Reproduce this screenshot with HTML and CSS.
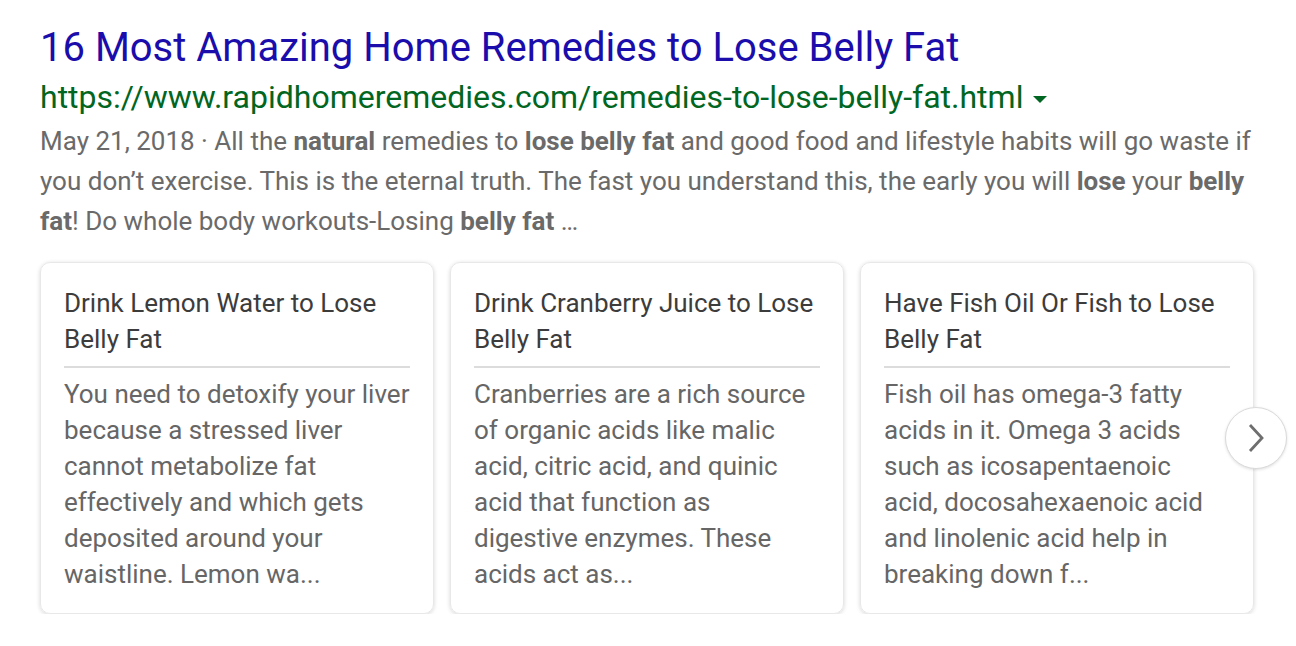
FILE: index.html
```html
<!DOCTYPE html>
<html>
<head>
<meta charset="utf-8">
<link rel="stylesheet" href="styles.css">
</head>
<body>
<div class="result">
  <h3 class="title">16 Most Amazing Home Remedies to Lose Belly Fat</h3>
  <div class="url">https://www.rapidhomeremedies.com/remedies-to-lose-belly-fat.html <span class="caret"></span></div>
  <div class="snippet">May 21, 2018 · All the <b>natural</b> remedies to <b>lose belly fat</b> and good food and lifestyle habits will go waste if you don’t exercise. This is the eternal truth. The fast you understand this, the early you will <b>lose</b> your <b>belly fat</b>! Do whole body workouts-Losing <b>belly fat</b> …</div>
  <div class="carousel">
    <div class="card">
      <div class="card-title">Drink Lemon Water to Lose Belly Fat</div>
      <div class="card-body">You need to detoxify your liver because a stressed liver cannot metabolize fat effectively and which gets deposited around your waistline. Lemon wa...</div>
    </div>
    <div class="card">
      <div class="card-title">Drink Cranberry Juice to Lose Belly Fat</div>
      <div class="card-body">Cranberries are a rich source of organic acids like malic acid, citric acid, and quinic acid that function as digestive enzymes. These acids act as...</div>
    </div>
    <div class="card">
      <div class="card-title">Have Fish Oil Or Fish to Lose Belly Fat</div>
      <div class="card-body">Fish oil has omega-3 fatty acids in it. Omega 3 acids such as icosapentaenoic acid, docosahexaenoic acid and linolenic acid help in breaking down f...</div>
    </div>
    <div class="next">
      <svg width="28" height="30" viewBox="0 0 28 30"><path d="M8 2 L20 15 L8 28" fill="none" stroke="#6e6e6e" stroke-width="2.8"/></svg>
    </div>
  </div>
</div>
</body>
</html>
```
FILE: styles.css
```css
html, body { margin: 0; padding: 0; background: #fff; }
body { font-family: Roboto, Arial, sans-serif; }
.result { padding: 23px 0 0 40px; width: 1230px; }
.title {
  margin: 0;
  font-weight: 400;
  font-size: 40px;
  line-height: 50px;
  color: #1a0dab;
}
.url {
  font-size: 32px;
  line-height: 48px;
  color: #006621;
  display: flex;
  align-items: center;
  gap: 10px;
}
.caret {
  width: 0; height: 0;
  border-left: 7px solid transparent;
  border-right: 7px solid transparent;
  border-top: 7px solid #006621;
  margin-top: 4px;
}
.snippet {
  font-size: 26px;
  line-height: 40px;
  color: #6a6a6a;
  width: 1216px;
}
.snippet b { font-weight: 700; color: #6a6a6a; }
.carousel {
  position: relative;
  display: flex;
  gap: 16px;
  margin-top: 21px;
}
.card {
  width: 394px;
  box-sizing: border-box;
  border-radius: 10px;
  border: 1px solid #e8e8e8;
  box-shadow: 0 1px 4px rgba(0,0,0,0.16);
  padding: 22px 23px 21px 23px;
}
.card-title {
  font-size: 26px;
  line-height: 36px;
  color: #3c3c3c;
  padding-bottom: 9px;
  border-bottom: 2px solid #dcdcdc;
}
.card-body {
  font-size: 26px;
  line-height: 36px;
  color: #666;
  margin-top: 8px;
}
.next {
  position: absolute;
  left: 1185px;
  top: 145px;
  width: 60px;
  height: 60px;
  border-radius: 50%;
  background: #fff;
  border: 1px solid #dadada;
  box-shadow: 0 1px 3px rgba(0,0,0,0.12);
  display: flex;
  align-items: center;
  justify-content: center;
}
```
